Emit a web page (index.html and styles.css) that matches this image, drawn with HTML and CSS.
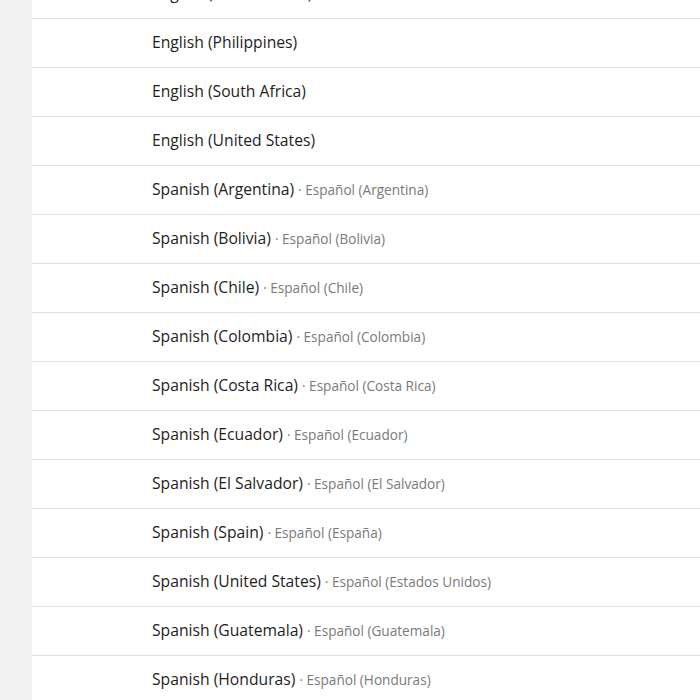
FILE: index.html
```html
<!DOCTYPE html>
<html>
<head>
<meta charset="utf-8">
<link rel="stylesheet" href="styles.css">
</head>
<body>
<div class="page">
  <aside class="rail"></aside>
  <main class="panel">
    <ul class="list">
      <li class="row"><span class="name">English (New Zealand)</span></li>
      <li class="row"><span class="name">English (Philippines)</span></li>
      <li class="row"><span class="name">English (South Africa)</span></li>
      <li class="row"><span class="name">English (United States)</span></li>
      <li class="row"><span class="name">Spanish (Argentina)</span><span class="native">· Español (Argentina)</span></li>
      <li class="row"><span class="name">Spanish (Bolivia)</span><span class="native">· Español (Bolivia)</span></li>
      <li class="row"><span class="name">Spanish (Chile)</span><span class="native">· Español (Chile)</span></li>
      <li class="row"><span class="name">Spanish (Colombia)</span><span class="native">· Español (Colombia)</span></li>
      <li class="row"><span class="name">Spanish (Costa Rica)</span><span class="native">· Español (Costa Rica)</span></li>
      <li class="row"><span class="name">Spanish (Ecuador)</span><span class="native">· Español (Ecuador)</span></li>
      <li class="row"><span class="name">Spanish (El Salvador)</span><span class="native">· Español (El Salvador)</span></li>
      <li class="row"><span class="name">Spanish (Spain)</span><span class="native">· Español (España)</span></li>
      <li class="row"><span class="name">Spanish (United States)</span><span class="native">· Español (Estados Unidos)</span></li>
      <li class="row"><span class="name">Spanish (Guatemala)</span><span class="native">· Español (Guatemala)</span></li>
      <li class="row"><span class="name">Spanish (Honduras)</span><span class="native">· Español (Honduras)</span></li>
    </ul>
  </main>
</div>
</body>
</html>
```
FILE: styles.css
```css
html, body {
  margin: 0;
  padding: 0;
  background: #ffffff;
  overflow: hidden;
}
.page {
  display: flex;
  width: 700px;
  height: 700px;
  overflow: hidden;
  font-family: "Open Sans", "Liberation Sans", sans-serif;
}
.rail {
  width: 32px;
  flex: none;
  background: #f2f2f2;
}
.panel {
  flex: 1;
  background: #ffffff;
}
.list {
  list-style: none;
  margin: -30px 0 0 0;
  padding: 0;
}
.row {
  box-sizing: border-box;
  height: 49px;
  padding: 0 0 2px 120px;
  border-bottom: 1px solid #e1e1e1;
  display: flex;
  align-items: center;
  gap: 4px;
  white-space: nowrap;
}
.name {
  font-size: 15.7px;
  color: #1e1e1e;
}
.native {
  font-size: 13.6px;
  color: #7a7a7a;
}
```
